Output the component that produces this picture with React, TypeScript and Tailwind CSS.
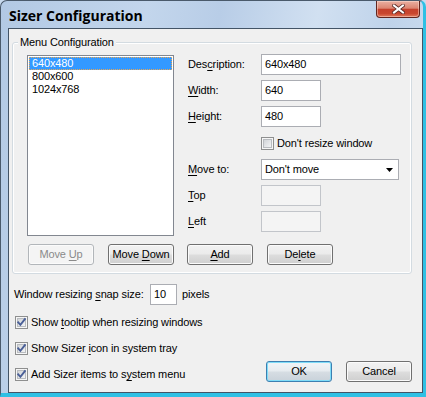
import React from "react";

function U({ children }: { children: React.ReactNode }) {
  return <span className="underline decoration-1 underline-offset-[2px]">{children}</span>;
}

function Check({ checked }: { checked: boolean }) {
  return (
    <svg width="13" height="13" viewBox="0 0 13 13" className="shrink-0 block">
      <defs>
        <linearGradient id="cbg" x1="0" y1="0" x2="1" y2="1">
          <stop offset="0" stopColor="#cfd2d6" />
          <stop offset="1" stopColor="#f5f6f7" />
        </linearGradient>
      </defs>
      <rect x="0.5" y="0.5" width="12" height="12" fill="#f6f6f6" stroke="#8e8f8f" />
      <rect x="2.5" y="2.5" width="8" height="8" fill="url(#cbg)" stroke="#b9bcc0" />
      {checked && (
        <path d="M3.2 6.3 L5.4 8.8 L9.9 3.2" fill="none" stroke="#4a5f97" strokeWidth="1.9" strokeLinecap="square" />
      )}
    </svg>
  );
}

function TextBox({
  w,
  value,
  disabled,
}: {
  w: string;
  value?: string;
  disabled?: boolean;
}) {
  return (
    <div
      className={`${w} h-[21px] border flex items-center pl-[3px] ${
        disabled ? "border-[#c2c5ca] bg-[#f4f4f4]" : "border-[#abadb3] bg-white"
      }`}
    >
      {value}
    </div>
  );
}

function Btn({
  children,
  disabled,
  def,
}: {
  children: React.ReactNode;
  disabled?: boolean;
  def?: boolean;
}) {
  const cls = disabled
    ? "border-[#b2b6ba] bg-[#f4f4f4] text-[#8a8a8a] shadow-[inset_0_0_0_1px_#fbfbfb]"
    : def
    ? "border-[#3c7fb1] bg-[linear-gradient(to_bottom,#f1f5f8_0%,#e6ebef_48%,#d6dde3_52%,#c9d2da_100%)] shadow-[inset_0_0_0_1px_#7fdcf8]"
    : "border-[#707070] bg-[linear-gradient(to_bottom,#f2f2f2_0%,#ebebeb_48%,#dddddd_52%,#cfcfcf_100%)] shadow-[inset_0_0_0_1px_#fbfbfb]";
  return (
    <div className={`w-[66px] h-[21px] rounded-[3px] border flex items-center justify-center ${cls}`}>
      <span>{children}</span>
    </div>
  );
}

export default function App() {
  return (
    <div className="w-[426px] h-[397px] overflow-hidden bg-[#c8daee] font-['Liberation_Sans',Arial,sans-serif] text-[11px] leading-[13px] tracking-[-0.12px] text-black">
      <div className="flex flex-col w-[426px] h-[397px] rounded-t-[7px] border-l border-t border-l-[#4a5a6b] border-t-[#4a5a6b] border-r-[3px] border-b-[4px] border-r-[#2fc0e4] border-b-[#2fc0e4] bg-[linear-gradient(100deg,#b2c9e4_0%,#c3d6ec_30%,#b8cde7_45%,#d1e0f1_65%,#bfd3ea_80%,#d4e3f3_100%)]">
        {/* title bar */}
        <div className="h-[27px] flex items-start justify-between">
          <div className="pl-[8px] pt-[6px] font-['Open_Sans',sans-serif] font-bold text-[14px] leading-[17px] tracking-normal text-black">
            Sizer Configuration
          </div>
          <div className="mr-[3px] w-[44px] h-[17px] rounded-b-[4px] border border-t-0 border-[#62261f] bg-[linear-gradient(to_bottom,#eab0a2_0%,#dc8571_45%,#c5412c_52%,#c9472f_78%,#e27a5c_100%)] shadow-[inset_0_0_0_1px_rgba(255,230,220,0.45)] flex items-center justify-center">
            <svg width="13" height="10" viewBox="0 0 13 10">
              <path d="M2 1.5 L11 8.5 M11 1.5 L2 8.5" stroke="#5a2a25" strokeWidth="3.6" strokeLinecap="square" />
              <path d="M2 1.5 L11 8.5 M11 1.5 L2 8.5" stroke="#ffffff" strokeWidth="2" strokeLinecap="square" />
            </svg>
          </div>
        </div>

        {/* client area */}
        <div className="flex-1 ml-[7px] border border-[#435466] bg-[#f0f0f0] flex flex-col">
          {/* group box */}
          <div className="ml-[3px] mt-[13px] w-[400px] relative rounded-[3px] border border-[#d3dbe1] shadow-[inset_0_0_0_1px_#ffffff] pt-[12px] pl-[14px] pb-[8px]">
            <div className="absolute left-[5px] -top-[7px] px-[2px] bg-[#f0f0f0]">Menu Configuration</div>
            <div className="flex">
              {/* listbox */}
              <div className="w-[147px] h-[181px] border border-[#828790] bg-white p-[1px]">
                <div className="h-[13px] bg-[#3399ff] text-white pl-[2px] border border-dotted border-[#e8a552] flex items-center">
                  640x480
                </div>
                <div className="h-[13px] pl-[3px] flex items-center">800x600</div>
                <div className="h-[13px] pl-[3px] flex items-center">1024x768</div>
              </div>
              {/* right column */}
              <div className="ml-[14px] -mt-[1px] flex flex-col">
                <div className="flex items-center h-[21px]">
                  <div className="w-[73px]">
                    Des<U>c</U>ription:
                  </div>
                  <TextBox w="w-[140px]" value="640x480" />
                </div>
                <div className="flex items-center h-[21px] mt-[5px]">
                  <div className="w-[73px]">
                    <U>W</U>idth:
                  </div>
                  <TextBox w="w-[60px]" value="640" />
                </div>
                <div className="flex items-center h-[21px] mt-[5px]">
                  <div className="w-[73px]">
                    <U>H</U>eight:
                  </div>
                  <TextBox w="w-[60px]" value="480" />
                </div>
                <div className="flex items-center h-[13px] mt-[10px] pl-[73px]">
                  <Check checked={false} />
                  <span className="ml-[3px]">Don't resize window</span>
                </div>
                <div className="flex items-center h-[21px] mt-[9px]">
                  <div className="w-[73px]">
                    <U>M</U>ove to:
                  </div>
                  <div className="w-[138px] h-[21px] border border-[#abadb3] bg-white flex items-center pl-[3px] justify-between">
                    <span>Don't move</span>
                    <svg width="7" height="4" viewBox="0 0 7 4" className="mr-[5px]">
                      <path d="M0 0 H7 L3.5 4 Z" fill="#000" />
                    </svg>
                  </div>
                </div>
                <div className="flex items-center h-[21px] mt-[5px]">
                  <div className="w-[73px]">
                    <U>T</U>op
                  </div>
                  <TextBox w="w-[60px]" disabled />
                </div>
                <div className="flex items-center h-[21px] mt-[5px]">
                  <div className="w-[73px]">
                    <U>L</U>eft
                  </div>
                  <TextBox w="w-[60px]" disabled />
                </div>
              </div>
            </div>
            {/* buttons */}
            <div className="flex mt-[8px] ml-[1px]">
              <Btn disabled>
                Move <U>U</U>p
              </Btn>
              <div className="ml-[14px]">
                <Btn>
                  Move <U>D</U>own
                </Btn>
              </div>
              <div className="ml-[13px]">
                <Btn>
                  <U>A</U>dd
                </Btn>
              </div>
              <div className="ml-[14px]">
                <Btn>
                  De<U>l</U>ete
                </Btn>
              </div>
            </div>
          </div>

          {/* bottom section */}
          <div className="flex mt-[10px] pl-[5px]">
            <div className="flex flex-col">
              <div className="flex items-center h-[21px]">
                <div className="w-[136px]">
                  Window resizing <U>s</U>nap size:
                </div>
                <TextBox w="w-[27px]" value="10" />
                <span className="ml-[5px]">pixels</span>
              </div>
              <div className="flex items-center h-[13px] mt-[11px] ml-[1px]">
                <Check checked />
                <span className="ml-[3px]">
                  Show <U>t</U>ooltip when resizing windows
                </span>
              </div>
              <div className="flex items-center h-[13px] mt-[13px] ml-[1px]">
                <Check checked />
                <span className="ml-[3px]">
                  Show Sizer <U>i</U>con in system tray
                </span>
              </div>
              <div className="flex items-center h-[13px] mt-[13px] ml-[1px]">
                <Check checked />
                <span className="ml-[3px]">
                  Add Sizer items to s<U>y</U>stem menu
                </span>
              </div>
            </div>
            <div className="ml-auto mr-[10px] mt-[77px] flex gap-[14px]">
              <Btn def>OK</Btn>
              <Btn>Cancel</Btn>
            </div>
          </div>
        </div>
      </div>
    </div>
  );
}
